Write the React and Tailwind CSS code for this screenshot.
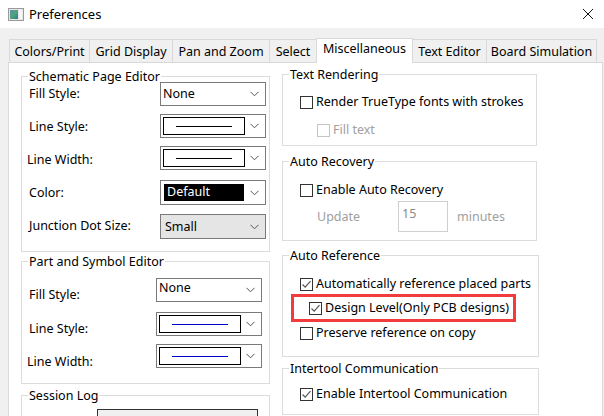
import React from "react";

function Chevron() {
  return (
    <svg width="9" height="6" viewBox="0 0 9 6" className="mr-[6px] shrink-0">
      <path d="M0.5 0.8 L4.5 4.8 L8.5 0.8" fill="none" stroke="#555" strokeWidth="1" />
    </svg>
  );
}

function Combo({ children, className }) {
  return (
    <div className={`flex w-[106px] shrink-0 items-center border border-[#7a7a7a] ${className}`}>
      <div className="flex h-full min-w-0 flex-1 items-center">{children}</div>
      <Chevron />
    </div>
  );
}

function LineBox({ color }) {
  return (
    <div className="ml-[2px] flex h-[18px] w-[82px] items-center justify-center border border-black bg-white">
      <div className={`h-[1px] w-[56px] ${color}`} />
    </div>
  );
}

function Check({ checked, disabled }) {
  return (
    <div
      className={`flex h-[13px] w-[13px] shrink-0 items-center justify-center border bg-white ${
        disabled ? "border-[#c4c4c4]" : "border-[#333333]"
      }`}
    >
      {checked && (
        <svg width="11" height="11" viewBox="0 0 11 11">
          <path d="M1.5 5.5 L4.2 8.2 L9.5 2.2" fill="none" stroke="#555" strokeWidth="1.2" />
        </svg>
      )}
    </div>
  );
}

function Group({ title, className, pad, children }) {
  return (
    <div className={`flex shrink-0 flex-col border border-[#dcdcdc] ${className}`}>
      <div className="-mb-[9px] -mt-[9px] ml-[6px] h-[17px] w-fit bg-white px-[1px] leading-[17px] text-black">
        {title}
      </div>
      <div className={`flex flex-col ${pad}`}>{children}</div>
    </div>
  );
}

function Tab({ label, selected, last, noLeft, w }) {
  if (selected) {
    return (
      <div
        className={`relative z-10 -mb-[1px] flex h-[25px] items-start justify-center border-l border-r border-t border-[#d9d9d9] bg-white pt-[4px] ${w}`}
      >
        {label}
      </div>
    );
  }
  return (
    <div
      className={`flex h-[23px] items-center justify-center border-t border-[#d9d9d9] bg-[#f0f0f0] pt-[2px] ${
        noLeft ? "" : "border-l"
      } ${last ? "border-r" : ""} ${w}`}
    >
      {label}
    </div>
  );
}

export default function App() {
  return (
    <div className="flex h-[416px] w-[604px] flex-col overflow-hidden bg-[#f0f0f0] font-['Noto_Sans',sans-serif] text-[12.5px] leading-none text-black">
      {/* Title bar */}
      <div className="flex h-[28px] shrink-0 items-center bg-white">
        <svg width="16" height="13" viewBox="0 0 16 13" className="ml-[8px]">
          <defs>
            <linearGradient id="g1" x1="0" y1="0" x2="1" y2="1">
              <stop offset="0" stopColor="#5b8fb0" />
              <stop offset="0.5" stopColor="#4fa57a" />
              <stop offset="1" stopColor="#2f7a8f" />
            </linearGradient>
          </defs>
          <rect x="0.5" y="0.5" width="15" height="12" fill="#e8e8e8" stroke="#9a9a9a" />
          <rect x="2" y="2" width="8" height="9" fill="url(#g1)" />
          <rect x="11" y="2" width="3" height="9" fill="#f6f6f6" />
        </svg>
        <span className="ml-[5px] text-[13px]">Preferences</span>
        <div className="flex-1" />
        <svg width="12" height="12" viewBox="0 0 12 12" className="mr-[10px]">
          <path d="M1 1 L11 11 M11 1 L1 11" stroke="#111" strokeWidth="1" />
        </svg>
      </div>

      {/* Tabs */}
      <div className="mt-[9px] flex h-[25px] shrink-0 items-end pl-[9px]">
        <Tab label="Colors/Print" w="w-[80px]" />
        <Tab label="Grid Display" w="w-[83px]" />
        <Tab label="Pan and Zoom" w="w-[97px]" />
        <Tab label="Select" w="w-[47px]" />
        <Tab label="Miscellaneous" selected w="w-[97px]" />
        <Tab label="Text Editor" noLeft w="w-[73px]" />
        <Tab label="Board Simulation" last w="w-[111px]" />
      </div>

      {/* Panel */}
      <div className="ml-[8px] flex w-[595px] flex-1 gap-[12px] border border-[#d9d9d9] bg-white pl-[12px]">
        {/* Left column */}
        <div className="flex w-[249px] shrink-0 flex-col pt-[13px]">
          <Group title="Schematic Page Editor" className="h-[176px]" pad="pt-[6px]">
            <div className="flex h-[24px] items-center">
              <span className="w-[138px] shrink-0 pl-[7px]">Fill Style:</span>
              <Combo className="h-[24px]">
                <span className="pl-[2px]">None</span>
              </Combo>
            </div>
            <div className="mt-[8px] flex h-[24px] items-center">
              <span className="w-[138px] shrink-0 pl-[7px] pt-[3px]">Line Style:</span>
              <Combo className="h-[24px]">
                <LineBox color="bg-black" />
              </Combo>
            </div>
            <div className="mt-[8px] flex h-[24px] items-center">
              <span className="w-[138px] shrink-0 pl-[5px] pt-[4px]">Line Width:</span>
              <Combo className="h-[24px]">
                <LineBox color="bg-black" />
              </Combo>
            </div>
            <div className="mt-[10px] flex h-[25px] items-center">
              <span className="w-[138px] shrink-0 pl-[7px] pt-[2px]">Color:</span>
              <Combo className="h-[25px]">
                <div className="ml-[3px] flex h-[17px] w-[80px] items-center bg-black pl-[3px] text-white">
                  Default
                </div>
              </Combo>
            </div>
            <div className="mt-[9px] flex h-[25px] items-center">
              <span className="w-[138px] shrink-0 pl-[7px]">Junction Dot Size:</span>
              <Combo className="h-[25px] bg-[#e5e5e5]">
                <span className="pl-[4px] pt-[2px]">Small</span>
              </Combo>
            </div>
          </Group>

          <Group title="Part and Symbol Editor" className="mt-[9px] h-[123px]" pad="pt-[17px]">
            <div className="flex h-[24px] items-center">
              <span className="w-[134px] shrink-0 pl-[7px] pt-[10px]">Fill Style:</span>
              <Combo className="h-[24px]">
                <span className="pb-[3px] pl-[2px]">None</span>
              </Combo>
            </div>
            <div className="mt-[10px] flex h-[24px] items-center">
              <span className="w-[134px] shrink-0 pl-[7px] pt-[10px]">Line Style:</span>
              <Combo className="h-[24px]">
                <LineBox color="bg-[#0000cc]" />
              </Combo>
            </div>
            <div className="mt-[8px] flex h-[24px] items-center">
              <span className="w-[134px] shrink-0 pl-[5px] pt-[13px]">Line Width:</span>
              <Combo className="h-[24px]">
                <LineBox color="bg-[#0000cc]" />
              </Combo>
            </div>
          </Group>

          <Group title="Session Log" className="mt-[11px] h-[60px]" pad="pt-[14px]">
            <div className="ml-[75px] h-[40px] w-[161px] border border-[#333] bg-[#f0f0f0]" />
          </Group>
        </div>

        {/* Right column */}
        <div className="flex w-[257px] shrink-0 flex-col pt-[11px]">
          <Group title="Text Rendering" className="h-[72px] w-[255px]" pad="pt-[22px]">
            <div className="flex h-[13px] items-center pl-[17px]">
              <Check />
              <span className="ml-[3px]">Render TrueType fonts with strokes</span>
            </div>
            <div className="mt-[15px] flex h-[13px] items-center pl-[34px]">
              <Check disabled />
              <span className="ml-[3px] text-[#a0a0a0]">Fill text</span>
            </div>
          </Group>

          <Group title="Auto Recovery" className="mt-[15px] h-[80px] w-[255px]" pad="pt-[23px]">
            <div className="flex h-[13px] items-center pl-[17px]">
              <Check />
              <span className="ml-[3px]">Enable Auto Recovery</span>
            </div>
            <div className="mt-[4px] flex h-[31px] items-center pl-[34px]">
              <span className="w-[81px] shrink-0 pt-[2px] text-[#a0a0a0]">Update</span>
              <div className="h-[31px] w-[50px] shrink-0 border border-[#cfcfcf] pl-[3px] pt-[6px] text-[#8a8a8a]">
                15
              </div>
              <span className="ml-[9px] pt-[2px] text-[#a0a0a0]">minutes</span>
            </div>
          </Group>

          <Group title="Auto Reference" className="mt-[14px] h-[102px] w-[257px]" pad="pt-[23px]">
            <div className="flex h-[13px] items-center pl-[17px]">
              <Check checked />
              <span className="ml-[3px]">Automatically reference placed parts</span>
            </div>
            <div className="ml-[8px] mt-[3px] flex h-[28px] w-[225px] items-center border-[3px] border-[#f03c3c] pl-[15px]">
              <Check checked />
              <span className="ml-[3px]">Design Level(Only PCB designs)</span>
            </div>
            <div className="mt-[5px] flex h-[13px] items-center pl-[17px]">
              <Check />
              <span className="ml-[3px]">Preserve reference on copy</span>
            </div>
          </Group>

          <Group title="Intertool Communication" className="mt-[11px] h-[47px] w-[257px]" pad="pt-[20px]">
            <div className="flex h-[13px] items-center pl-[17px]">
              <Check checked />
              <span className="ml-[3px]">Enable Intertool Communication</span>
            </div>
          </Group>
        </div>
      </div>
    </div>
  );
}
